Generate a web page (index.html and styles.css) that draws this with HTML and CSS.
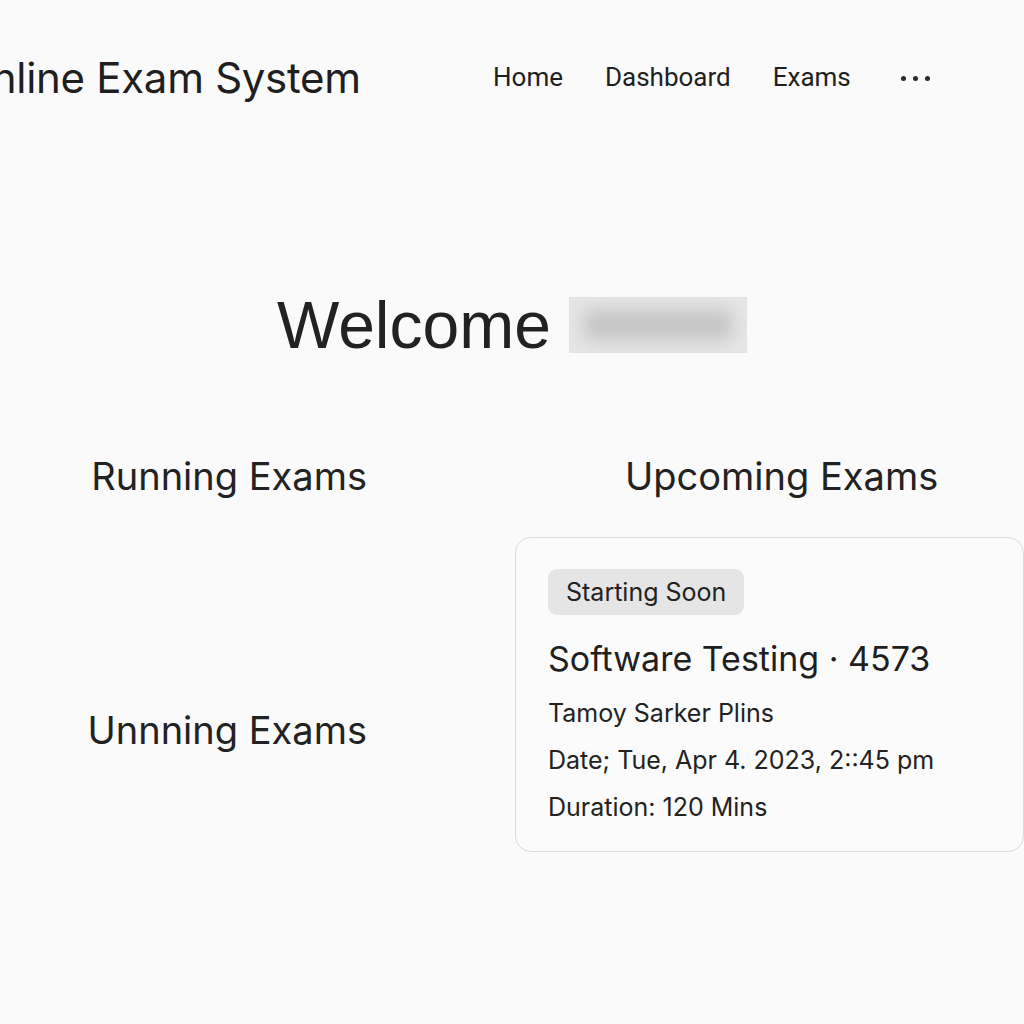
FILE: index.html
```html
<!DOCTYPE html>
<html lang="en">
<head>
<meta charset="utf-8">
<title>Online Exam System</title>
<link rel="stylesheet" href="styles.css">
</head>
<body>
<header class="topbar">
  <div class="brand">Online Exam System</div>
  <nav class="nav">
    <a class="nav-link" href="#">Home</a>
    <a class="nav-link" href="#">Dashboard</a>
    <a class="nav-link" href="#">Exams</a>
    <span class="nav-more" aria-label="More">
      <span class="dot"></span><span class="dot"></span><span class="dot"></span>
    </span>
  </nav>
</header>

<section class="welcome">
  <h1 class="welcome-title">Welcome</h1>
  <span class="name-blur"></span>
</section>

<main class="columns">
  <div class="col col-left">
    <h2 class="col-title">Running Exams</h2>
    <h2 class="col-title second">Unnning Exams</h2>
  </div>
  <div class="col col-right">
    <h2 class="col-title upcoming">Upcoming Exams</h2>
    <article class="card">
      <span class="badge">Starting Soon</span>
      <h3 class="card-title">Software Testing · 4573</h3>
      <p class="card-line">Tamoy Sarker Plins</p>
      <p class="card-line">Date; Tue, Apr 4. 2023, 2::45 pm</p>
      <p class="card-line">Duration: 120 Mins</p>
    </article>
  </div>
</main>
</body>
</html>
```
FILE: styles.css
```css
html, body {
  margin: 0;
  padding: 0;
}
body {
  background: #fafafa;
  color: #222;
  font-family: Inter, "Noto Sans", sans-serif;
  width: 1024px;
  height: 1024px;
  overflow: hidden;
}
.topbar {
  display: flex;
  align-items: center;
  height: 154px;
}
.brand {
  font-size: 42px;
  font-weight: 400;
  margin-left: -40px;
  letter-spacing: -0.3px;
  color: #1f1f1f;
  width: 533px;
  flex-shrink: 0;
  white-space: nowrap;
}
.nav {
  display: flex;
  align-items: center;
  gap: 42px;
}
.nav-link {
  font-family: Roboto, Inter, sans-serif;
  font-size: 26px;
  color: #1f1f1f;
  text-decoration: none;
}
.nav-more {
  display: flex;
  gap: 7px;
  margin-left: 8px;
  padding-top: 3px;
}
.dot {
  width: 5px;
  height: 5px;
  border-radius: 50%;
  background: #2a2a2a;
}
.welcome {
  display: flex;
  justify-content: center;
  align-items: center;
  gap: 18px;
  margin-top: 137px;
  height: 68px;
}
.welcome-title {
  margin: 0;
  font-family: "Liberation Sans", Arial, sans-serif;
  font-weight: 400;
  font-size: 66px;
  color: #222;
  line-height: 1;
}
.name-blur {
  width: 178px;
  height: 56px;
  background: #e6e6e6;
  border: 1px solid #e2e2e2;
  box-sizing: border-box;
  position: relative;
  overflow: hidden;
}
.name-blur::after {
  content: "";
  position: absolute;
  left: 14px;
  right: 14px;
  top: 12px;
  bottom: 12px;
  background: #c4c4c4;
  filter: blur(9px);
}
.columns {
  display: grid;
  grid-template-columns: 515px 509px;
  margin-top: 93px;
}
.col-left {
  display: flex;
  flex-direction: column;
  align-items: flex-end;
  padding-right: 148px;
}
.col-title {
  margin: 0;
  font-weight: 400;
  font-size: 38px;
  line-height: 48px;
  color: #222;
}
.second {
  margin-top: 206px;
}
.upcoming {
  padding-left: 110px;
}
.card {
  margin-top: 37px;
  width: 509px;
  height: 315px;
  box-sizing: border-box;
  border: 1px solid #dadada;
  border-radius: 16px;
  background: #fbfbfb;
  padding: 31px 32px;
  display: flex;
  flex-direction: column;
  align-items: flex-start;
}
.badge {
  display: inline-block;
  background: #e5e5e5;
  border-radius: 9px;
  padding: 0 18px;
  height: 46px;
  line-height: 46px;
  font-size: 25px;
  color: #222;
}
.card-title {
  margin: 20px 0 7px;
  font-weight: 400;
  font-size: 34px;
  line-height: 48px;
  color: #1f1f1f;
}
.card-line {
  margin: 0;
  font-size: 25px;
  line-height: 47px;
  color: #222;
}
```
